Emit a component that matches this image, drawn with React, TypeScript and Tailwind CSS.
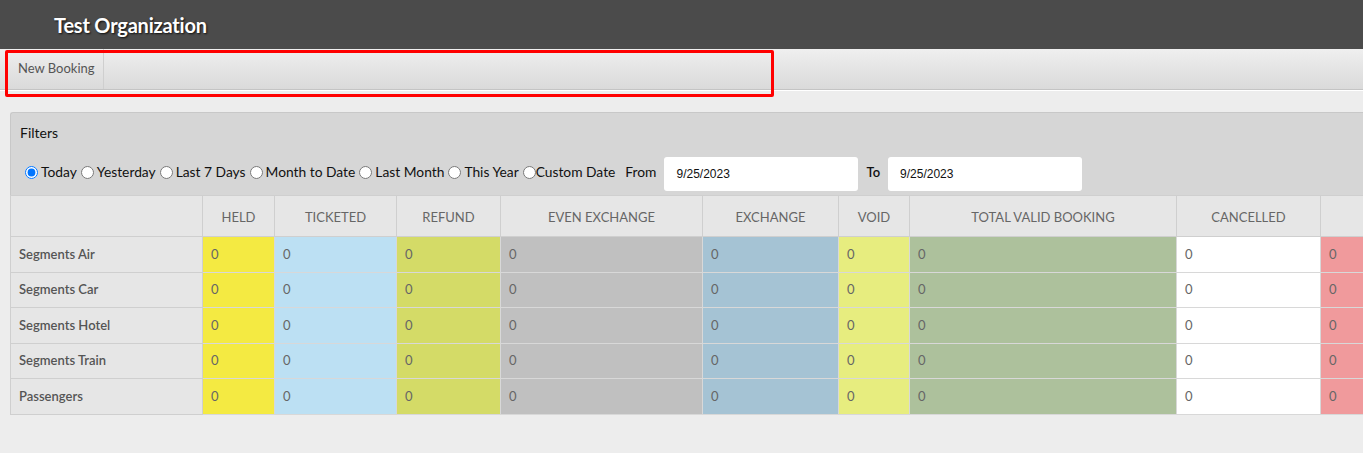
const columns = [
  { name: "HELD", w: "w-[72px]", bg: "bg-[#f4ea42]" },
  { name: "TICKETED", w: "w-[122px]", bg: "bg-[#bce0f3]" },
  { name: "REFUND", w: "w-[104px]", bg: "bg-[#d4db67]" },
  { name: "EVEN EXCHANGE", w: "w-[202px]", bg: "bg-[#c0c0c0]" },
  { name: "EXCHANGE", w: "w-[136px]", bg: "bg-[#a5c3d4]" },
  { name: "VOID", w: "w-[71px]", bg: "bg-[#e7ed7f]" },
  { name: "TOTAL VALID BOOKING", w: "w-[267px]", bg: "bg-[#adc19c]" },
  { name: "CANCELLED", w: "w-[144px]", bg: "bg-white" },
  { name: "", w: "w-[120px]", bg: "bg-[#f09a9c]" },
];

const rows = ["Segments Air", "Segments Car", "Segments Hotel", "Segments Train", "Passengers"];

const ranges = ["Today", "Yesterday", "Last 7 Days", "Month to Date", "Last Month", "This Year", "Custom Date"];

export default function App() {
  return (
    <div className="relative h-[453px] w-[1363px] overflow-hidden bg-[#ededed] font-['Lato','Open_Sans',sans-serif]">
      <header className="flex h-[49px] items-center bg-[#4b4b4b] pl-[54px]">
        <h1 className="text-[20px] font-bold tracking-[-0.2px] text-white [text-shadow:1px_1px_2px_rgba(0,0,0,0.8)]">
          Test Organization
        </h1>
      </header>

      <nav className="flex h-[41px] border-b border-[#c4c4c4] bg-gradient-to-b from-[#efefef] to-[#dadada] pl-[10px] shadow-[0_1px_0_#fff]">
        <a className="flex items-center border-r border-[#cfcfcf] px-[8px] text-[13px] text-[#555]">New Booking</a>
      </nav>

      <div className="pointer-events-none absolute left-[5px] top-[50px] h-[47px] w-[769px] rounded-[2px] border-[3px] border-[#ff0000]" />

      <main className="ml-[10px] mt-[22px] w-[1460px]">
        <section className="rounded-tl-[3px] border-t border-l border-[#c8c8c8] bg-[#d6d6d6]">
          <div className="h-[42px] pl-[9px] pt-[9px] text-[14px] text-[#111]">Filters</div>
          <div className="flex h-[40px] items-start pl-[10px] pt-[2px] text-[13.8px] text-[#111]">
            <div className="flex h-[34px] items-center pb-[3px]">
              {ranges.map((r, i) => (
                <label key={r} className="flex items-center">
                  <input
                    type="radio"
                    name="range"
                    defaultChecked={i === 0}
                    className={i === ranges.length - 1 ? "m-0 ml-[4px] mr-0 h-[13px] w-[13px]" : "m-0 ml-[4px] mr-[3px] h-[13px] w-[13px]"}
                  />
                  <span>{r}</span>
                </label>
              ))}
              <span className="ml-[10px] mr-[8px]">From</span>
            </div>
            <input
              readOnly
              value="9/25/2023"
              className="h-[34px] w-[194px] rounded-[3px] bg-white px-[12px] font-['Liberation_Sans',sans-serif] text-[12px] text-[#111] outline-none"
            />
            <span className="ml-[8px] mr-[8px] flex h-[34px] items-center pb-[2px] text-[13px] font-semibold">To</span>
            <input
              readOnly
              value="9/25/2023"
              className="h-[34px] w-[194px] rounded-[3px] bg-white px-[12px] font-['Liberation_Sans',sans-serif] text-[12px] text-[#111] outline-none"
            />
          </div>
        </section>

        <table className="table-fixed border-collapse text-[13px]">
          <thead>
            <tr className="h-[41px] bg-[#e6e6e6]">
              <th className="w-[192px] border border-[#cfcfcf]" />
              {columns.map((c, i) => (
                <th key={i} className={`${c.w} border border-[#cfcfcf] pt-[3px] font-normal text-[#666]`}>
                  {c.name}
                </th>
              ))}
            </tr>
          </thead>
          <tbody>
            {rows.map((r) => (
              <tr key={r} className="h-[35.5px]">
                <td className="border border-[#cfcfcf] bg-[#e6e6e6] pl-[8px] font-semibold text-[#555]">{r}</td>
                {columns.map((c, i) => (
                  <td key={i} className={`${c.bg} border border-[#d8d8d8] pl-[8px] text-[#666]`}>
                    0
                  </td>
                ))}
              </tr>
            ))}
          </tbody>
        </table>
      </main>
    </div>
  );
}
